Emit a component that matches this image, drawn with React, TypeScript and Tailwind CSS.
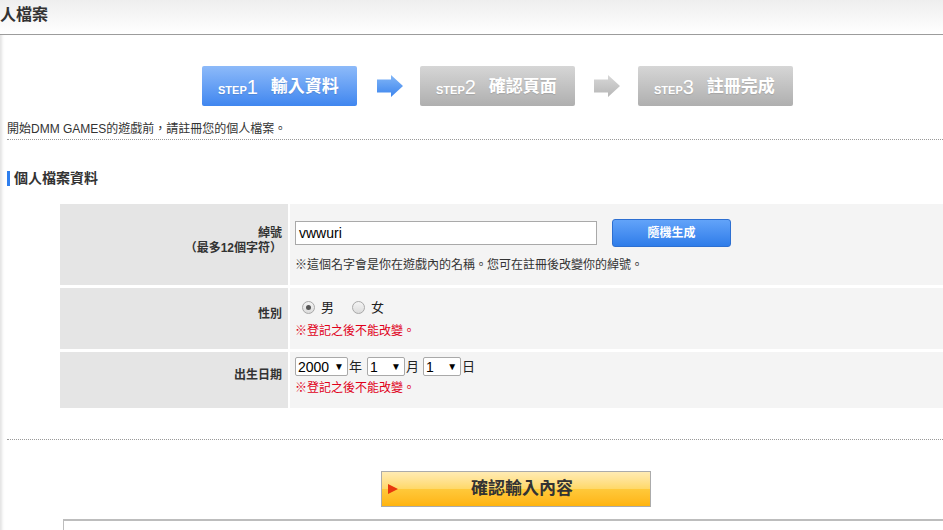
import React from 'react';

// Profile registration — step 1 of 3

const font = "font-['Liberation_Sans','Noto_Sans_CJK_TC',sans-serif]";

function Step({ n, label, active }: { n: number; label: string; active?: boolean }) {
  return (
    <div
      className={`flex h-[40px] w-[155px] items-center rounded-[2px] pl-[16px] text-white [text-shadow:0_1px_1px_rgba(0,0,0,0.12)] ${
        active ? 'bg-gradient-to-b from-[#8dbaf9] to-[#3f86ef]' : 'bg-gradient-to-b from-[#d6d6d6] to-[#afafaf]'
      }`}
    >
      <span className="mt-[8px] text-[11px] font-bold leading-none">STEP</span>
      <span className="mt-[2px] text-[20px] leading-none">{n}</span>
      <span className="ml-[13px] text-[17px] font-bold leading-none">{label}</span>
    </div>
  );
}

function Arrow({ active }: { active?: boolean }) {
  const id = active ? 'arrowBlue' : 'arrowGray';
  return (
    <svg width="28" height="24" viewBox="0 0 28 24" className="shrink-0">
      <defs>
        <linearGradient id={id} x1="0" y1="0" x2="0" y2="1">
          <stop offset="0" stopColor={active ? '#82b6f7' : '#d8d8d8'} />
          <stop offset="1" stopColor={active ? '#3c85ee' : '#b6b6b6'} />
        </linearGradient>
      </defs>
      <path d="M1 5.5h14V1l12 11-12 11v-4.5H1z" fill={`url(#${id})`} />
    </svg>
  );
}

function Radio({ checked, label }: { checked?: boolean; label: string }) {
  return (
    <span className="flex items-center">
      <span className="flex h-[13px] w-[13px] items-center justify-center rounded-full border border-[#a9a9a9] bg-gradient-to-b from-[#f4f4f4] to-[#dcdcdc]">
        {checked && <span className="h-[5px] w-[5px] rounded-full bg-[#555]" />}
      </span>
      <span className="ml-[6px] text-[13px] text-[#222]">{label}</span>
    </span>
  );
}

function FakeSelect({ value, w }: { value: string; w: string }) {
  return (
    <span className={`flex h-[19px] ${w} items-center justify-between rounded-[2px] border border-[#a9a9a9] bg-white pl-[2px] pr-[3px]`}>
      <span className="text-[14px] leading-none text-black">{value}</span>
      <span className="text-[10px] leading-none text-black">▼</span>
    </span>
  );
}

export default function App() {
  return (
    <div className={`h-[530px] w-full overflow-hidden bg-white text-[#333] ${font}`}>
      {/* Header */}
      <div className="flex h-[35px] items-center border-b border-[#9c9c9c] bg-gradient-to-b from-[#eeeeee] to-white pb-[4px]">
        <h1 className="text-[16px] font-bold leading-none text-[#333]">人檔案</h1>
      </div>

      <div className="h-full shadow-[inset_4px_0_3px_-2px_#e2e2e2]">
        {/* Steps */}
        <div className="flex items-center pl-[202px] pt-[31px]">
          <Step n={1} label="輸入資料" active />
          <span className="ml-[19px] mr-[16px]">
            <Arrow active />
          </span>
          <Step n={2} label="確認頁面" />
          <span className="ml-[18px] mr-[17px]">
            <Arrow />
          </span>
          <Step n={3} label="註冊完成" />
        </div>

        {/* Intro */}
        <p className="ml-[7px] mt-[15px] border-b border-dotted border-[#999] pb-[2px] text-[12px] leading-[16px]">
          開始DMM GAMES的遊戲前，請註冊您的個人檔案。
        </p>

        {/* Section heading */}
        <div className="ml-[7px] mt-[30px] flex items-center">
          <span className="h-[15px] w-[3px] bg-[#2f7fee]" />
          <h2 className="ml-[4px] text-[14px] font-bold leading-[16px] text-[#333]">個人檔案資料</h2>
        </div>

        {/* Form table */}
        <div className="ml-[60px] mt-[18px] grid grid-cols-[228px_1fr] gap-x-[2px] gap-y-[3px] text-[12px]">
          <div className="flex h-[81px] flex-col items-end justify-center bg-[#e5e5e5] pb-[8px] pr-[6px] font-bold leading-[15px]">
            <span>綽號</span>
            <span>（最多12個字符）</span>
          </div>
          <div className="bg-[#f4f4f4] pl-[5px] pt-[15px]">
            <div className="flex items-center">
              <span className="flex h-[24px] w-[302px] items-center border border-[#a9a9a9] bg-white pl-[3px] text-[14px] text-black">
                vwwuri
              </span>
              <button className="ml-[15px] h-[28px] w-[119px] rounded-[3px] border border-[#2d6fd1] bg-gradient-to-b from-[#62a3f9] to-[#2e7ce9] text-[12px] font-bold text-white">
                隨機生成
              </button>
            </div>
            <p className="mt-[10px] leading-[16px]">※這個名字會是你在遊戲內的名稱。您可在註冊後改變你的綽號。</p>
          </div>

          <div className="flex h-[61px] items-center justify-end bg-[#e5e5e5] pb-[10px] pr-[6px] font-bold">性別</div>
          <div className="bg-[#f4f4f4] pl-[12px] pt-[10px]">
            <div className="flex items-center gap-[18px]">
              <Radio checked label="男" />
              <Radio label="女" />
            </div>
            <p className="-ml-[7px] mt-[5px] leading-[16px] text-[#e0001a]">※登記之後不能改變。</p>
          </div>

          <div className="flex h-[56px] items-center justify-end bg-[#e5e5e5] pb-[10px] pr-[6px] font-bold">出生日期</div>
          <div className="bg-[#f4f4f4] pl-[5px] pt-[5px]">
            <div className="flex items-center text-[13px] text-[#222]">
              <FakeSelect value="2000" w="w-[53px]" />
              <span className="ml-[1px] mr-[5px]">年</span>
              <FakeSelect value="1" w="w-[38px]" />
              <span className="ml-[1px] mr-[4px]">月</span>
              <FakeSelect value="1" w="w-[38px]" />
              <span className="ml-[1px]">日</span>
            </div>
            <p className="mt-[3px] leading-[16px] text-[#e0001a]">※登記之後不能改變。</p>
          </div>
        </div>

        {/* Divider */}
        <div className="ml-[7px] mt-[31px] border-b border-dotted border-[#999]" />

        {/* Confirm */}
        <button className="relative ml-[381px] mt-[31px] flex h-[36px] w-[270px] items-center justify-center overflow-hidden border border-[#ababab] pl-[12px]">
          <span className="absolute inset-x-0 top-0 h-1/2 bg-gradient-to-b from-[#ffebb3] to-[#ffd866]" />
          <span className="absolute inset-x-0 bottom-0 h-1/2 bg-gradient-to-b from-[#ffc93a] to-[#ffb40c]" />
          <span className="absolute left-[6px] top-[12px] h-0 w-0 border-y-[5px] border-l-[10px] border-y-transparent border-l-[#e8380d]" />
          <span className="relative text-[17px] font-bold text-[#333]">確認輸入內容</span>
        </button>

        {/* Lower box */}
        <div className="ml-[63px] mt-[12px] h-[40px] border-l border-t-2 border-[#bdbdbd]" />
      </div>
    </div>
  );
}
